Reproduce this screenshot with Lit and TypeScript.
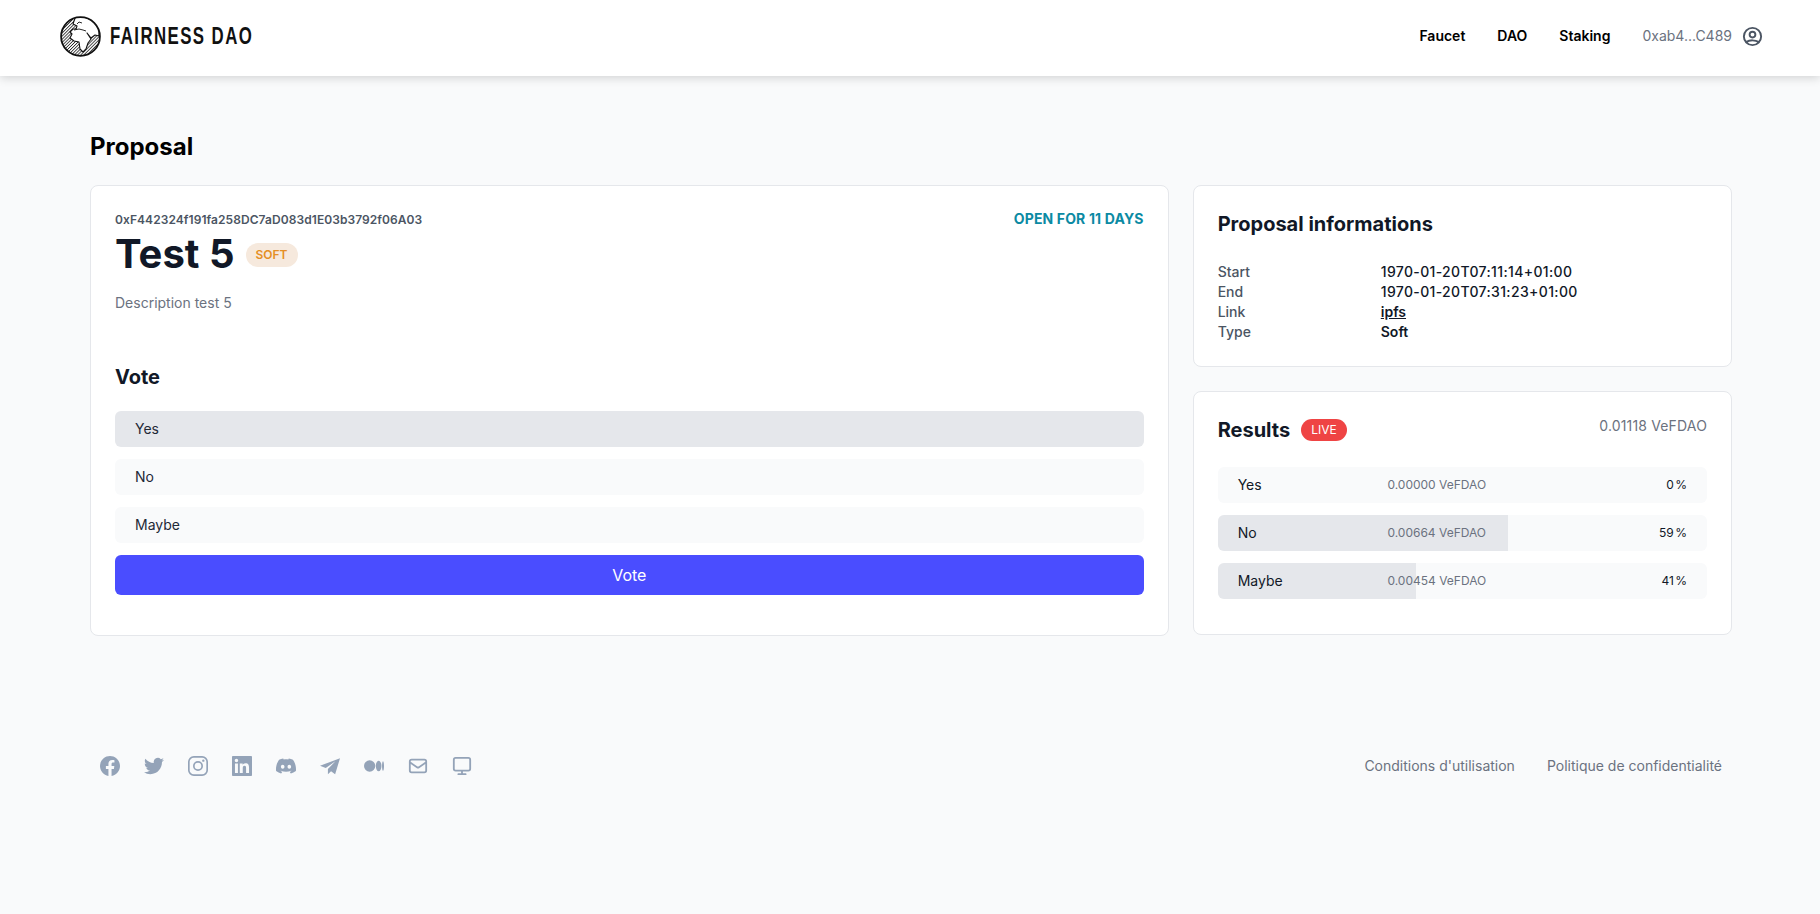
import { LitElement, html, css, svg } from "lit";
import { customElement } from "lit/decorators.js";

const ICONS = [
  { vb: "0 0 24 24", g: svg`<path fill="currentColor" d="M24 12.073c0-6.627-5.373-12-12-12s-12 5.373-12 12c0 5.99 4.388 10.954 10.125 11.854v-8.385H7.078v-3.47h3.047V9.43c0-3.007 1.792-4.669 4.533-4.669 1.312 0 2.686.235 2.686.235v2.953H15.83c-1.491 0-1.956.925-1.956 1.874v2.25h3.328l-.532 3.47h-2.796v8.385C19.612 23.027 24 18.062 24 12.073z"/>` },
  { vb: "0 0 24 24", g: svg`<path fill="currentColor" d="M23.953 4.57a10 10 0 01-2.825.775 4.958 4.958 0 002.163-2.723c-.951.555-2.005.959-3.127 1.184a4.92 4.92 0 00-8.384 4.482C7.69 8.095 4.067 6.13 1.64 3.162a4.822 4.822 0 00-.666 2.475c0 1.71.87 3.213 2.188 4.096a4.904 4.904 0 01-2.228-.616v.06a4.923 4.923 0 003.946 4.827 4.996 4.996 0 01-2.212.085 4.936 4.936 0 004.604 3.417 9.867 9.867 0 01-6.102 2.105c-.39 0-.779-.023-1.17-.067a13.995 13.995 0 007.557 2.209c9.053 0 13.998-7.496 13.998-13.985 0-.21 0-.42-.015-.63A9.935 9.935 0 0024 4.59z"/>` },
  { vb: "0 0 24 24", g: svg`<g fill="none" stroke="currentColor" stroke-width="2"><rect x="1" y="1" width="22" height="22" rx="6"/><circle cx="12" cy="12" r="5"/></g><circle cx="18.4" cy="5.6" r="1.4" fill="currentColor"/>` },
  { vb: "0 0 24 24", g: svg`<path fill="currentColor" d="M20.447 20.452h-3.554v-5.569c0-1.328-.027-3.037-1.852-3.037-1.853 0-2.136 1.445-2.136 2.939v5.667H9.351V9h3.414v1.561h.046c.477-.9 1.637-1.85 3.37-1.85 3.601 0 4.267 2.37 4.267 5.455v6.286zM5.337 7.433c-1.144 0-2.063-.926-2.063-2.065 0-1.138.92-2.063 2.063-2.063 1.14 0 2.064.925 2.064 2.063 0 1.139-.925 2.065-2.064 2.065zm1.782 13.019H3.555V9h3.564v11.452zM23 0H1C.4 0 0 .4 0 1v22c0 .6.4 1 1 1h22c.6 0 1-.4 1-1V1c0-.6-.4-1-1-1z"/>` },
  { vb: "0 0 24 24", g: svg`<path fill="currentColor" d="M20.317 4.3698a19.7913 19.7913 0 00-4.8851-1.5152.0741.0741 0 00-.0785.0371c-.211.3753-.4447.8648-.6083 1.2495-1.8447-.2762-3.68-.2762-5.4868 0-.1636-.3933-.4058-.8742-.6177-1.2495a.077.077 0 00-.0785-.037 19.7363 19.7363 0 00-4.8852 1.515.0699.0699 0 00-.0321.0277C.5334 9.0458-.319 13.5799.0992 18.0578a.0824.0824 0 00.0312.0561c2.0528 1.5076 4.0413 2.4228 5.9929 3.0294a.0777.0777 0 00.0842-.0276c.4616-.6304.8731-1.2952 1.226-1.9942a.076.076 0 00-.0416-.1057c-.6528-.2476-1.2743-.5495-1.8722-.8923a.077.077 0 01-.0076-.1277c.1258-.0943.2517-.1923.3718-.2914a.0743.0743 0 01.0776-.0105c3.9278 1.7933 8.18 1.7933 12.0614 0a.0739.0739 0 01.0785.0095c.1202.099.246.1981.3728.2924a.077.077 0 01-.0066.1276 12.2986 12.2986 0 01-1.873.8914.0766.0766 0 00-.0407.1067c.3604.698.7719 1.3628 1.225 1.9932a.076.076 0 00.0842.0286c1.961-.6067 3.9495-1.5219 6.0023-3.0294a.077.077 0 00.0313-.0552c.5004-5.177-.8382-9.6739-3.5485-13.6604a.061.061 0 00-.0312-.0286zM8.02 15.3312c-1.1825 0-2.1569-1.0857-2.1569-2.419 0-1.3332.9555-2.4189 2.157-2.4189 1.2108 0 2.1757 1.0952 2.1568 2.419 0 1.3332-.9555 2.4189-2.1569 2.4189zm7.9748 0c-1.1825 0-2.1569-1.0857-2.1569-2.419 0-1.3332.9554-2.4189 2.1569-2.4189 1.2108 0 2.1757 1.0952 2.1568 2.419 0 1.3332-.946 2.4189-2.1568 2.4189Z"/>` },
  { vb: "0.5 0.5 23 23", g: svg`<path fill="currentColor" d="M23.5 3 L.5 11.8 l6.6 2.4 L18.2 6.6 L9.6 15.4 V21.6 l3.6-3.6 4.7 3.6z"/>` },
  { vb: "0 0 24 24", g: svg`<path fill="currentColor" d="M13.54 12a6.8 6.8 0 01-6.77 6.82A6.8 6.8 0 010 12a6.8 6.8 0 016.77-6.82A6.8 6.8 0 0113.54 12zM20.96 12c0 3.54-1.51 6.42-3.38 6.42-1.87 0-3.39-2.88-3.39-6.42s1.52-6.42 3.39-6.42 3.38 2.88 3.38 6.42M24 12c0 3.17-.53 5.75-1.19 5.75-.66 0-1.19-2.58-1.19-5.75s.53-5.75 1.19-5.75C23.47 6.25 24 8.83 24 12z"/>` },
  { vb: "1 1 22 22", g: svg`<path fill="none" stroke="currentColor" stroke-width="2" stroke-linecap="round" stroke-linejoin="round" d="M3 8l7.89 5.26a2 2 0 002.22 0L21 8M5 19h14a2 2 0 002-2V7a2 2 0 00-2-2H5a2 2 0 00-2 2v10a2 2 0 002 2z"/>` },
  { vb: "1 1 22 22", g: svg`<path fill="none" stroke="currentColor" stroke-width="2" stroke-linecap="round" stroke-linejoin="round" d="M12 17v4M8 21h8M5 17h14a2 2 0 002-2V5a2 2 0 00-2-2H5a2 2 0 00-2 2v10a2 2 0 002 2z"/>` },
];

const RESULTS = [
  { name: "Yes", value: "0.00000 VeFDAO", pct: 0, label: "0 %" },
  { name: "No", value: "0.00664 VeFDAO", pct: 59.4, label: "59 %" },
  { name: "Maybe", value: "0.00454 VeFDAO", pct: 40.6, label: "41 %" },
];

@customElement("app-root")
export class AppRoot extends LitElement {
  static styles = css`
    :host {
      display: block;
      min-height: 914px;
      background: #f9fafb;
      font-family: Inter, "Liberation Sans", sans-serif;
      color: #111827;
      font-size: 14px;
      line-height: 20px;
    }
    * { box-sizing: border-box; }
    header {
      height: 76px;
      background: #fff;
      box-shadow: 0 2px 9px rgba(0,0,0,.16);
      display: flex;
      align-items: center;
      justify-content: space-between;
      padding: 0 56px 4px 60px;
    }
    .brand { display: flex; align-items: center; gap: 9px; }
    .brand svg { display: block; width: 41px; height: 41px; }
    .wordmark {
      font-family: "Liberation Sans", sans-serif;
      font-weight: 700;
      font-size: 24px;
      letter-spacing: 2.05px;
      color: #111;
      line-height: 28px;
      white-space: nowrap;
      display: inline-block;
      transform: scaleX(.7);
      transform-origin: left center;
    }
    nav { display: flex; align-items: center; }
    nav a { font-weight: 600; color: #000; margin-right: 32px; }
    .addr { color: #6b7280; margin-right: 9px; }
    .user { width: 23px; height: 23px; color: #4b5563; display: block; }
    main { padding: 57px 88px 0 90px; }
    h1 { margin: 0 0 24px; font-size: 24px; line-height: 28px; font-weight: 700; color: #000; }
    .grid { display: grid; grid-template-columns: 2fr 1fr; gap: 24px; }
    .card {
      background: #fff;
      border: 1px solid #e5e7eb;
      border-radius: 8px;
      padding: 24px;
    }
    .right { display: flex; flex-direction: column; gap: 24px; }
    .top { display: flex; justify-content: space-between; align-items: flex-start; }
    .hash { font-size: 12px; line-height: 16px; font-weight: 600; color: #4b5563; margin-top: 2px; letter-spacing: .07px; }
    .open { font-weight: 700; color: #0b8aa3; line-height: 16px; margin-top: 1px; letter-spacing: .15px; }
    .title { display: flex; align-items: center; gap: 11px; margin-top: 4px; }
    .title h2 { margin: 0; font-size: 40px; line-height: 44px; font-weight: 700; color: #111827; }
    .badge {
      border-radius: 999px;
      font-size: 12px;
      line-height: 24px;
      height: 24px;
      padding: 0 10px;
    }
    .soft { background: #f6e9dd; color: #e58f24; font-weight: 600; margin-top: 1px; }
    .desc { color: #6b7280; margin: 17px 0 0; }
    h3 { margin: 0; font-size: 20px; line-height: 28px; font-weight: 700; color: #111827; }
    .vote-title { margin-top: 50px; margin-bottom: 20px; }
    .opts { display: flex; flex-direction: column; gap: 12px; }
    .opt {
      height: 36px;
      border-radius: 6px;
      background: #f9fafb;
      padding: 0 20px;
      display: flex;
      align-items: center;
      color: #1f2937;
    }
    .opt.sel { background: #e5e7eb; }
    .btn {
      height: 40px;
      margin: 12px 0 16px;
      background: #4a4dff;
      color: #fff;
      border-radius: 6px;
      font-size: 16px;
      display: flex;
      align-items: center;
      justify-content: center;
    }
    .info h3 { margin: 0 0 24px; }
    .info { padding-bottom: 24px; }
    .rows { display: grid; grid-template-columns: 1fr 2fr; }
    .rows .k { font-weight: 500; color: #4b5563; }
    .rows .v { font-weight: 500; color: #111827; }
    .rows .date { letter-spacing: .35px; }
    .rows .strong { font-weight: 600; }
    .res-head { display: flex; justify-content: space-between; align-items: flex-start; margin-bottom: 23px; }
    .res-left { display: flex; align-items: center; gap: 11px; }
    .live { background: #ef4444; color: #fff; line-height: 22px; height: 22px; padding: 0 10px; }
    .total { color: #6b7280; letter-spacing: .15px; }
    .bars { display: flex; flex-direction: column; gap: 12px; padding-bottom: 11px; }
    .bar {
      position: relative;
      height: 36px;
      border-radius: 6px;
      background: #f9fafb;
      overflow: hidden;
    }
    .fill { position: absolute; left: 0; top: 0; bottom: 0; background: #e5e7eb; }
    .bar-row {
      position: relative;
      height: 100%;
      padding: 0 20px;
      display: grid;
      grid-template-columns: 1fr 1fr 1fr;
      align-items: center;
    }
    .bar-val { font-size: 12px; color: #6b7280; }
    .bar-pct { font-size: 12px; text-align: right; color: #111827; word-spacing: -2px; }
    footer {
      display: flex;
      justify-content: space-between;
      align-items: center;
      padding: 0 98px 0 100px;
      margin-top: 120px;
    }
    .social { display: flex; gap: 24px; color: #94a3b8; }
    .social svg { display: block; width: 20px; height: 20px; }
    .links { display: flex; gap: 32px; color: #6b7280; }
  `;

  private logo() {
    return html`<svg viewBox="0 0 41 41" aria-hidden="true">
      <defs>
        <pattern id="hatch" width="2.2" height="2.2" patternUnits="userSpaceOnUse" patternTransform="rotate(-45)">
          <rect width="2.2" height="2.2" fill="#fff"></rect>
          <rect width="2.2" height=".8" fill="#222"></rect>
        </pattern>
        <clipPath id="earth"><circle cx="20.5" cy="20.5" r="19"></circle></clipPath>
      </defs>
      <circle cx="20.5" cy="20.5" r="19.4" fill="url(#hatch)"></circle>
      <g clip-path="url(#earth)">
        <path fill="#fff" stroke="#111" stroke-width="1.1" stroke-linejoin="round"
          d="M16 0l-2 5 -1 3 4 2 -1 3 -3 0 -3 3 2 2 -2 4 4 3 5 1 1 7 3 3 3-3 2-6 3-4 -2-3 -2-3 4 5 4-3 4 1V0z"></path>
        <path fill="none" stroke="#111" stroke-width=".9" d="M14 14l5-1 4 1 3 1M17 8l2-2 3 1"></path>
      </g>
      <circle cx="20.5" cy="20.5" r="19.4" fill="none" stroke="#111" stroke-width="1.8"></circle>
    </svg>`;
  }

  render() {
    return html`
      <header>
        <div class="brand">${this.logo()}<span class="wordmark">FAIRNESS DAO</span></div>
        <nav>
          <a>Faucet</a><a>DAO</a><a>Staking</a>
          <span class="addr">0xab4...C489</span>
          <svg class="user" viewBox="0 0 24 24" fill="none" stroke="currentColor" stroke-width="2" stroke-linecap="round" stroke-linejoin="round">
            <path d="M5.121 17.804A13.937 13.937 0 0112 16c2.5 0 4.847.655 6.879 1.804M15 10a3 3 0 11-6 0 3 3 0 016 0zm6 2a9 9 0 11-18 0 9 9 0 0118 0z"></path>
          </svg>
        </nav>
      </header>
      <main>
        <h1>Proposal</h1>
        <div class="grid">
          <section class="card">
            <div class="top">
              <span class="hash">0xF442324f191fa258DC7aD083d1E03b3792f06A03</span>
              <span class="open">OPEN FOR 11 DAYS</span>
            </div>
            <div class="title"><h2>Test 5</h2><span class="badge soft">SOFT</span></div>
            <p class="desc">Description test 5</p>
            <h3 class="vote-title">Vote</h3>
            <div class="opts">
              <div class="opt sel">Yes</div>
              <div class="opt">No</div>
              <div class="opt">Maybe</div>
            </div>
            <div class="btn">Vote</div>
          </section>
          <div class="right">
            <section class="card info">
              <h3>Proposal informations</h3>
              <div class="rows">
                <span class="k">Start</span><span class="v date">1970-01-20T07:11:14+01:00</span>
                <span class="k">End</span><span class="v date">1970-01-20T07:31:23+01:00</span>
                <span class="k">Link</span><span class="v strong"><u>ipfs</u></span>
                <span class="k">Type</span><span class="v strong">Soft</span>
              </div>
            </section>
            <section class="card">
              <div class="res-head">
                <div class="res-left"><h3>Results</h3><span class="badge live">LIVE</span></div>
                <span class="total">0.01118 VeFDAO</span>
              </div>
              <div class="bars">
                ${RESULTS.map(
                  (r) => html`<div class="bar">
                    <div class="fill" style="width:${r.pct}%"></div>
                    <div class="bar-row">
                      <span>${r.name}</span><span class="bar-val">${r.value}</span><span class="bar-pct">${r.label}</span>
                    </div>
                  </div>`
                )}
              </div>
            </section>
          </div>
        </div>
      </main>
      <footer>
        <div class="social">${ICONS.map((i) => html`<svg viewBox="${i.vb}">${i.g}</svg>`)}</div>
        <div class="links"><span>Conditions d'utilisation</span><span>Politique de confidentialité</span></div>
      </footer>
    `;
  }
}
